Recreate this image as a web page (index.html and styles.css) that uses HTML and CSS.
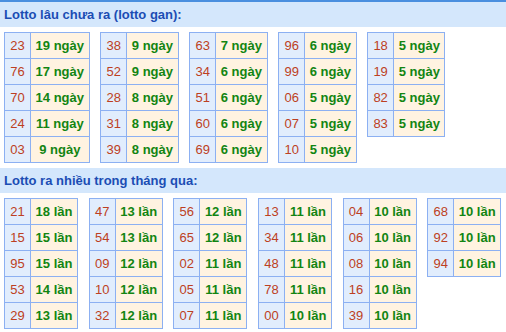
FILE: index.html
```html
<!DOCTYPE html>
<html lang="vi">
<head>
<meta charset="utf-8">
<title>Lotto</title>
<link rel="stylesheet" href="styles.css">
</head>
<body>
<div class="box">
  <h2 class="head">Lotto lâu chưa ra (lotto gan):</h2>
  <div class="group">
    <table class="lt"><tr><td class="n">23</td><td class="v">19 ngày</td></tr><tr><td class="n">76</td><td class="v">17 ngày</td></tr><tr><td class="n">70</td><td class="v">14 ngày</td></tr><tr><td class="n">24</td><td class="v">11 ngày</td></tr><tr><td class="n">03</td><td class="v">9 ngày</td></tr></table>
    <table class="lt"><tr><td class="n">38</td><td class="v">9 ngày</td></tr><tr><td class="n">52</td><td class="v">9 ngày</td></tr><tr><td class="n">28</td><td class="v">8 ngày</td></tr><tr><td class="n">31</td><td class="v">8 ngày</td></tr><tr><td class="n">39</td><td class="v">8 ngày</td></tr></table>
    <table class="lt"><tr><td class="n">63</td><td class="v">7 ngày</td></tr><tr><td class="n">34</td><td class="v">6 ngày</td></tr><tr><td class="n">51</td><td class="v">6 ngày</td></tr><tr><td class="n">60</td><td class="v">6 ngày</td></tr><tr><td class="n">69</td><td class="v">6 ngày</td></tr></table>
    <table class="lt"><tr><td class="n">96</td><td class="v">6 ngày</td></tr><tr><td class="n">99</td><td class="v">6 ngày</td></tr><tr><td class="n">06</td><td class="v">5 ngày</td></tr><tr><td class="n">07</td><td class="v">5 ngày</td></tr><tr><td class="n">10</td><td class="v">5 ngày</td></tr></table>
    <table class="lt"><tr><td class="n">18</td><td class="v">5 ngày</td></tr><tr><td class="n">19</td><td class="v">5 ngày</td></tr><tr><td class="n">82</td><td class="v">5 ngày</td></tr><tr><td class="n">83</td><td class="v">5 ngày</td></tr></table>
  </div>
  <h2 class="head head2">Lotto ra nhiều trong tháng qua:</h2>
  <div class="group">
    <table class="lt"><tr><td class="n">21</td><td class="v">18 lần</td></tr><tr><td class="n">15</td><td class="v">15 lần</td></tr><tr><td class="n">95</td><td class="v">15 lần</td></tr><tr><td class="n">53</td><td class="v">14 lần</td></tr><tr><td class="n">29</td><td class="v">13 lần</td></tr></table>
    <table class="lt"><tr><td class="n">47</td><td class="v">13 lần</td></tr><tr><td class="n">54</td><td class="v">13 lần</td></tr><tr><td class="n">09</td><td class="v">12 lần</td></tr><tr><td class="n">10</td><td class="v">12 lần</td></tr><tr><td class="n">32</td><td class="v">12 lần</td></tr></table>
    <table class="lt"><tr><td class="n">56</td><td class="v">12 lần</td></tr><tr><td class="n">65</td><td class="v">12 lần</td></tr><tr><td class="n">02</td><td class="v">11 lần</td></tr><tr><td class="n">05</td><td class="v">11 lần</td></tr><tr><td class="n">07</td><td class="v">11 lần</td></tr></table>
    <table class="lt"><tr><td class="n">13</td><td class="v">11 lần</td></tr><tr><td class="n">34</td><td class="v">11 lần</td></tr><tr><td class="n">48</td><td class="v">11 lần</td></tr><tr><td class="n">78</td><td class="v">11 lần</td></tr><tr><td class="n">00</td><td class="v">10 lần</td></tr></table>
    <table class="lt"><tr><td class="n">04</td><td class="v">10 lần</td></tr><tr><td class="n">06</td><td class="v">10 lần</td></tr><tr><td class="n">08</td><td class="v">10 lần</td></tr><tr><td class="n">16</td><td class="v">10 lần</td></tr><tr><td class="n">39</td><td class="v">10 lần</td></tr></table>
    <table class="lt"><tr><td class="n">68</td><td class="v">10 lần</td></tr><tr><td class="n">92</td><td class="v">10 lần</td></tr><tr><td class="n">94</td><td class="v">10 lần</td></tr></table>
  </div>
</div>
</body>
</html>
```
FILE: styles.css
```css
html, body {
  margin: 0;
  padding: 0;
  background: #ffffff;
}
body {
  font-family: "Liberation Sans", Arial, sans-serif;
  font-size: 13px;
}
.box {
  border-top: 2px solid #4a8fdf;
}
.head {
  margin: 0;
  height: 25px;
  line-height: 25px;
  padding: 0 4px;
  background: #d4e7fc;
  color: #1b4db4;
  font-size: 13px;
  font-weight: bold;
}
.head2 {
  margin-top: 5px;
}
.group {
  display: flex;
  align-items: flex-start;
  gap: 10.6px;
  padding: 5px 4px 0;
}
.lt {
  border-collapse: collapse;
  border: 1px solid #8cb0f2;
}
.lt td {
  border: 1px solid #8cb0f2;
  height: 25px;
  padding: 0;
  line-height: 25px;
  white-space: nowrap;
}
.lt .n {
  width: 25px;
  text-align: center;
  background: #e1edfd;
  color: #bd3f22;
}
.lt .v {
  padding: 0 4.6px;
  text-align: center;
  background: #fff3e1;
  color: #128512;
  font-weight: bold;
}
```
